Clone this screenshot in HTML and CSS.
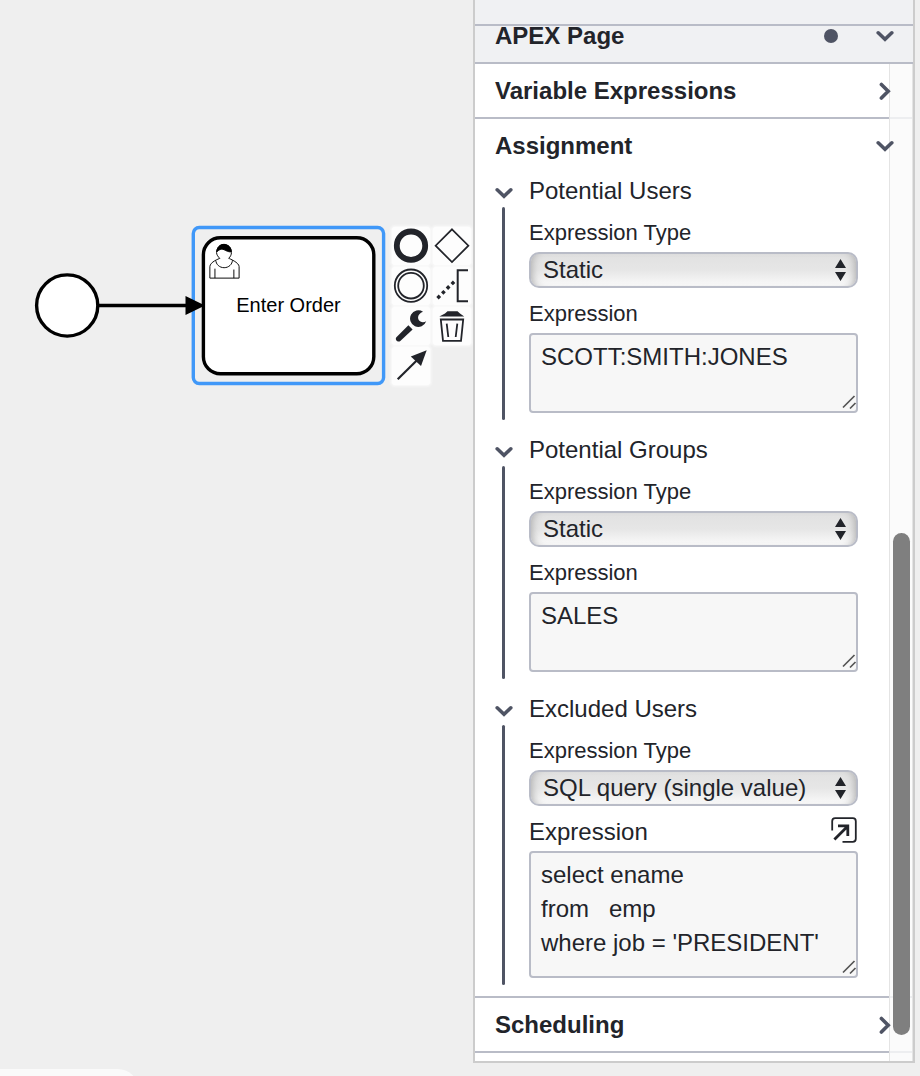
FILE: index.html
```html
<!DOCTYPE html>
<html lang="en">
<head>
<meta charset="utf-8">
<title>Flow modeler</title>
<meta name="viewport" content="width=device-width, initial-scale=1">
<link rel="stylesheet" href="styles.css">
</head>
<body>
<svg class="sprite" aria-hidden="true">
  <symbol id="down" viewBox="0 0 18 18"><path d="M2.2 5.8 9 12.2 15.8 5.8" fill="none" stroke="currentColor" stroke-width="3.6" stroke-linecap="round"/></symbol>
  <symbol id="right" viewBox="0 0 18 18"><path d="M5.4 2.4 12.2 9.2 5.4 16" fill="none" stroke="currentColor" stroke-width="3.6" stroke-linecap="round"/></symbol>
  <symbol id="updown" viewBox="0 0 11 22"><path d="M0 9 5.5 0 11 9ZM0 13H11L5.5 22Z" fill="currentColor"/></symbol>
  <symbol id="grip" viewBox="0 0 16 16"><path d="M2 13.5 13.5 2M9 14.5 14.5 9" fill="none" stroke="#555" stroke-width="1.7"/></symbol>
</svg>
<div class="app">
  <main class="canvas">
    <svg class="diagram" role="img" aria-label="Start event connected to the Enter Order task">
      <circle cx="67.2" cy="305.5" r="30.6" fill="#fff" stroke="#000" stroke-width="3.4"/>
      <rect x="203.4" y="237.7" width="170.4" height="136" rx="17" fill="#fff" stroke="#000" stroke-width="3.4"/>
      <rect x="193.3" y="227.5" width="190.3" height="156" rx="6" fill="none" stroke="#4098f8" stroke-width="3.4"/>
      <path d="M98 305.5H188" stroke="#000" stroke-width="3.4"/>
      <path d="M185.5 296 205 305.5 185.5 315Z"/>
      <g transform="translate(202.9 237.7) scale(1.72)" fill="#fff" stroke="#000" stroke-width=".55">
        <path d="m15 12c.909-.845 1.594-2.049 1.594-3.385 0-2.554-1.805-4.622-4.357-4.622-2.552 0-4.288 2.068-4.288 4.622 0 1.348.974 2.562 1.896 3.405-.529.187-5.669 2.097-5.794 4.756v6.718h17v-6.718c0-2.298-5.528-4.595-6.051-4.776zm-8 6v5.5m11 0v-5"/>
        <path d="m17.162 13.009c0 2.447-2.158 4.431-4.821 4.431-2.665 0-4.822-1.981-4.822-4.431"/>
        <path fill="#000" d="m8.1 8.2c0 0 2.251-2.358 4.274-1.177 2.024 1.181 4.221 1.537 4.124.965-.098-.57-.117-3.791-4.191-4.136-3.575.001-4.208 3.367-4.207 4.348z"/>
      </g>
      <text class="task-label" x="288.5" y="312" text-anchor="middle">Enter Order</text>
    </svg>
    <div class="pad">
      <button type="button" aria-label="Append end event"><svg viewBox="0 0 38 38"><circle cx="19" cy="18.7" r="14.2" fill="none" stroke="currentColor" stroke-width="5.8"/></svg></button>
      <button type="button" aria-label="Append gateway"><svg viewBox="0 0 38 38"><path d="M19 2.3 35.4 18.7 19 35.1 2.6 18.7Z" fill="none" stroke="currentColor" stroke-width="1.7"/></svg></button>
      <button type="button" aria-label="Append intermediate event"><svg viewBox="0 0 38 38"><g fill="none" stroke="currentColor" stroke-width="1.8"><circle cx="19" cy="18.7" r="16.2"/><circle cx="19" cy="18.7" r="12.8"/></g></svg></button>
      <button type="button" aria-label="Append text annotation"><svg viewBox="0 0 38 38"><path d="M35 3.2H24.7V34.2H35" fill="none" stroke="currentColor" stroke-width="2"/><path d="m5.7 27.6 2.4 2.4-2.4 2.4L3.3 30zM10.4 22.9l2.4 2.4-2.4 2.4L8 25.3zM15.1 18.1l2.4 2.4-2.4 2.4-2.4-2.4zM19.9 13.5l2.4 2.4-2.4 2.4-2.4-2.4z" fill="currentColor"/></svg></button>
      <button type="button" aria-label="Change type"><svg viewBox="0 0 38 38"><path d="M31 4.7A8.3 8.3 0 1 0 34.2 14.3C31.5 15.8 28 15.3 26.6 12.8 25 9.8 27 6 31 4.7Z" fill="currentColor"/><path d="M16.4 18.2 20.6 22.4 8.3 34C6 36 2.4 32.5 4.4 30.2Z" fill="currentColor"/></svg></button>
      <button type="button" aria-label="Remove"><svg viewBox="0 0 38 38"><path d="M6.3 9.4 12 6.4 14.5 4.2H24.5L27 6.4 31.2 9.4Z" fill="currentColor"/><path d="M7.8 12.5H30.2L28 33.8H10ZM13.7 16.6 15.3 30M24.3 16.6 22.7 30" fill="none" stroke="currentColor" stroke-width="1.8"/></svg></button>
      <button type="button" aria-label="Connect"><svg viewBox="0 0 38 38"><path d="M5.7 32.3 28 10.3" stroke="currentColor" stroke-width="2.2"/><path d="M34.7 3.2 18.8 9.5 29 19Z" fill="currentColor"/></svg></button>
    </div>
    <div class="corner"></div>
  </main>

  <aside class="panel">
    <div class="strip"></div>
    <button type="button" class="section sticky"><span>APEX Page</span><i class="dot"></i><svg class="chev"><use href="#down"/></svg></button>
    <div class="scroll">
      <button type="button" class="section"><span>Variable Expressions</span><svg class="chev"><use href="#right"/></svg></button>
      <section class="assignment">
        <button type="button" class="section open"><span>Assignment</span><svg class="chev"><use href="#down"/></svg></button>
        <div class="groups">
          <div class="group">
            <button type="button" class="group-head"><svg class="chev"><use href="#down"/></svg><span>Potential Users</span></button>
            <div class="fields">
              <label for="ut">Expression Type</label>
              <div class="control"><select id="ut"><option>Static</option></select><svg class="updown"><use href="#updown"/></svg></div>
              <label for="ue">Expression</label>
              <div class="control"><textarea id="ue" class="short" spellcheck="false">SCOTT:SMITH:JONES</textarea><svg class="grip"><use href="#grip"/></svg></div>
            </div>
          </div>
          <div class="group">
            <button type="button" class="group-head"><svg class="chev"><use href="#down"/></svg><span>Potential Groups</span></button>
            <div class="fields">
              <label for="gt">Expression Type</label>
              <div class="control"><select id="gt"><option>Static</option></select><svg class="updown"><use href="#updown"/></svg></div>
              <label for="ge">Expression</label>
              <div class="control"><textarea id="ge" class="short" spellcheck="false">SALES</textarea><svg class="grip"><use href="#grip"/></svg></div>
            </div>
          </div>
          <div class="group">
            <button type="button" class="group-head"><svg class="chev"><use href="#down"/></svg><span>Excluded Users</span></button>
            <div class="fields">
              <label for="xt">Expression Type</label>
              <div class="control"><select id="xt"><option>SQL query (single value)</option></select><svg class="updown"><use href="#updown"/></svg></div>
              <div class="label-row">
                <label for="xe">Expression</label>
                <button type="button" class="popout" aria-label="Open editor"><svg viewBox="0 0 26 26"><path d="M1.2 13.5V4.2Q1.2 1.2 4.2 1.2H21.8Q24.8 1.2 24.8 4.2V21.8Q24.8 24.8 21.8 24.8H11.5" fill="none" stroke="currentColor" stroke-width="1.8"/><path d="M3.4 22.4 16.4 9.4M7 8.9H16.8V19" fill="none" stroke="currentColor" stroke-width="2.8"/></svg></button>
              </div>
              <div class="control"><textarea id="xe" class="tall" spellcheck="false">select ename
from   emp
where job = 'PRESIDENT'</textarea><svg class="grip"><use href="#grip"/></svg></div>
            </div>
          </div>
        </div>
      </section>
      <button type="button" class="section"><span>Scheduling</span><svg class="chev"><use href="#right"/></svg></button>
      <div class="track"><div class="thumb"></div></div>
    </div>
  </aside>
</div>
</body>
</html>
```
FILE: styles.css
```css
* { box-sizing: border-box; }

body {
  margin: 0;
  background: #efefef;
  color: #22242a;
  font-family: "Liberation Sans", Arial, Helvetica, sans-serif;
  font-size: 24px;
}

button, select, textarea { font: inherit; color: inherit; margin: 0; }
button { border: 0; padding: 0; background: none; text-align: left; }
svg { display: block; }
.sprite { position: absolute; width: 0; height: 0; }

.app {
  display: flex;
  align-items: flex-start;
  min-height: 100vh;
  padding-right: 5px;
}

/* Diagram canvas */
.canvas {
  position: relative;
  flex: 1;
  align-self: stretch;
  overflow: hidden;
}
.diagram { position: absolute; inset: 0; width: 100%; height: 100%; }
.task-label { font-size: 20px; }

.pad {
  position: absolute;
  left: 392px;
  top: 227px;
  display: grid;
  grid-template-columns: 38px 38px;
  gap: 2px 3px;
}
.pad button {
  height: 38px;
  border-radius: 3px;
  background: #fdfdfd;
  box-shadow: 0 0 3px 1px #fdfdfd;
}

.corner {
  position: absolute;
  left: 0;
  bottom: -33px;
  width: 138px;
  height: 40px;
  border-radius: 0 20px 0 0;
  background: #fafafa;
}

/* Properties panel */
.panel {
  flex: 0 0 442px;
  background: #fff;
  border: 2px solid #ccc;
  border-top: 0;
}
.strip {
  height: 26px;
  background: #f0f1f3;
  border-bottom: 2px solid #b9bcc7;
}
.section {
  display: flex;
  align-items: center;
  width: 100%;
  height: 55px;
  padding: 0 19px 0 20px;
  border-bottom: 2px solid #b9bcc7;
  font-weight: bold;
  line-height: 28px;
}
.section span { flex: 1; }
.section.open { height: 54px; border-bottom: 0; }
.section.sticky {
  height: 38px;
  padding-bottom: 16px;
  background: #f0f1f3;
}
.dot {
  width: 14px;
  height: 14px;
  margin-right: 38px;
  border-radius: 50%;
  background: #4f5464;
}
.chev {
  position: relative;
  z-index: 2;
  flex: none;
  width: 18px;
  height: 18px;
  color: #4f5464;
}

.scroll { position: relative; padding-bottom: 8px; }
.assignment { padding-bottom: 11px; border-bottom: 2px solid #b9bcc7; }
.groups {
  display: flex;
  flex-direction: column;
  gap: 12px;
  padding: 0 55px 0 20px;
}
.group-head {
  display: flex;
  align-items: center;
  gap: 16px;
  width: 100%;
  height: 34px;
  padding-top: 2px;
}
.group-head .chev { margin-top: 4px; }
.fields {
  position: relative;
  margin-left: 7px;
  padding: 14px 0 7px 27px;
}
.fields::before {
  content: "";
  position: absolute;
  inset: 0 auto 0 0;
  width: 3px;
  border-radius: 2px;
  background: #4f5464;
}
label { display: block; font-size: 22px; line-height: 24px; }
.control { position: relative; margin-top: 7px; }
.control + label, .label-row { margin-top: 14px; }
.label-row { display: flex; align-items: center; justify-content: space-between; height: 24px; }
.label-row label { font-size: 24px; }
.popout svg { width: 26px; height: 26px; }
.popout { margin: -5px 1px 0 0; }

select {
  display: block;
  appearance: none;
  width: 100%;
  height: 36px;
  padding: 0 40px 2px 12px;
  border: 2px solid #b9bcc7;
  border-radius: 10px;
  background: linear-gradient(#e1e1e1, #e6e6e6 50%, #fafafa);
  box-shadow: inset 8px 0 8px -7px #aaa, inset -8px 0 8px -7px #aaa;
}
textarea {
  display: block;
  width: 100%;
  padding: 5px 10px;
  border: 2px solid #b9bcc7;
  border-radius: 4px;
  background: #f7f7f7;
  line-height: 34px;
  resize: none;
  overflow: hidden;
}
.short { height: 80px; }
.tall { height: 127px; }
.updown { position: absolute; right: 12px; top: 7px; width: 11px; height: 22px; pointer-events: none; }
.grip { position: absolute; right: 1px; bottom: 3px; width: 16px; height: 16px; pointer-events: none; }

/* Scrollbar laid over the panel content */
.track {
  position: absolute;
  z-index: 1;
  top: 0;
  right: 0;
  bottom: 0;
  width: 24px;
  background: rgba(250, 250, 250, .8);
  border: solid #e4e4e4;
  border-width: 0 1px 0 1px;
}
.thumb {
  position: absolute;
  top: 47%;
  left: 3px;
  width: 17px;
  height: 50.4%;
  border-radius: 9px;
  background: #7f7f7f;
}
```
